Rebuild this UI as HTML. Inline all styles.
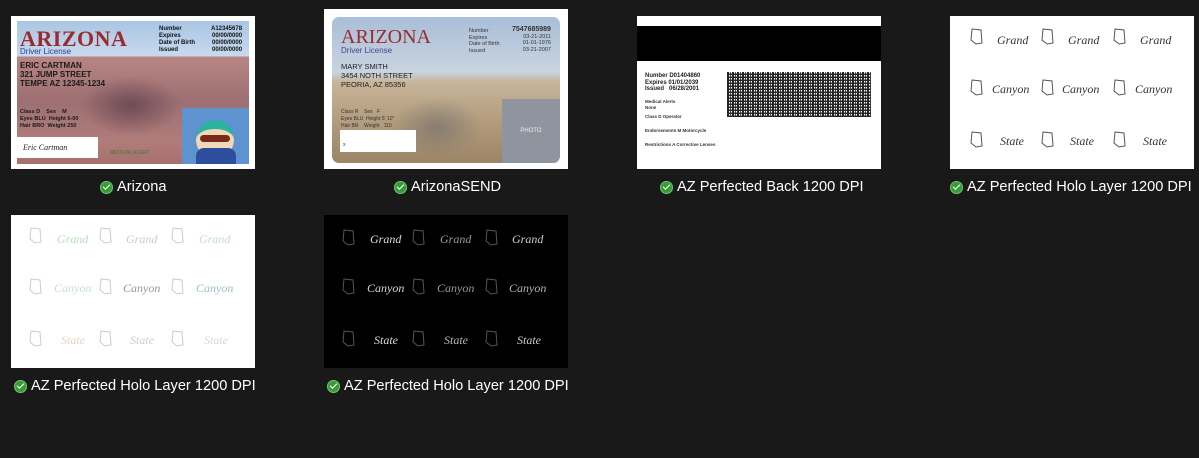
<!DOCTYPE html>
<html><head><meta charset="utf-8"><style>
body{margin:0;width:1199px;height:458px;background:#191919;position:relative;overflow:hidden;font-family:"Liberation Sans",sans-serif}
.t{position:absolute;overflow:hidden}
.lb{position:absolute;color:#fff;font-size:14.6px;white-space:nowrap;display:flex;align-items:center;gap:4px;height:18px}
.ck{width:13px;height:13px;border-radius:50%;background:#3a9a3a;box-shadow:0 0 0 1px #6dbf6d inset;position:relative;flex:none}
.ck:after{content:"";position:absolute;left:3px;top:3px;width:6px;height:3px;border-left:1.6px solid #fff;border-bottom:1.6px solid #fff;transform:rotate(-45deg)}
.a{position:absolute}
</style></head><body>

<!-- Thumb 1 -->
<div class="t" style="left:11px;top:16px;width:244px;height:153px;background:#fff">
 <div class="a" style="left:6px;top:5px;width:232px;height:143px;background:linear-gradient(180deg,#a9c6e3 0,#c7d9ee 35px,#b88583 36px,#9d6f72 80px,#b07c7a 120px,#a6706d 143px)"></div>
 <div class="a" style="left:70px;top:60px;width:100px;height:60px;background:radial-gradient(ellipse,#5a3c48,transparent 70%);opacity:.7"></div>
 <div class="a" style="left:9px;top:10px;font-family:'Liberation Serif',serif;font-weight:bold;font-size:22px;color:#9a2a2e;letter-spacing:.5px">ARIZONA</div>
 <div class="a" style="left:9px;top:31px;font-size:8px;color:#2c3d8a">Driver License</div>
 <div class="a" style="left:148px;top:10px;font-size:6px;font-weight:bold;line-height:7px;color:#111">Number<br>Expires<br>Date of Birth<br>Issued</div>
 <div class="a" style="left:200px;top:10px;font-size:6px;font-weight:bold;line-height:7px;color:#111;text-align:right">A12345678<br>00/00/0000<br>00/00/0000<br>00/00/0000</div>
 <div class="a" style="left:9px;top:45px;font-size:8px;font-weight:bold;line-height:9px;color:#1a1a1a">ERIC CARTMAN<br>321 JUMP STREET<br>TEMPE AZ 12345-1234</div>
 <div class="a" style="left:9px;top:93px;font-size:5.5px;font-weight:bold;line-height:7px;color:#1a1a1a">Class D &nbsp;&nbsp; Sex &nbsp;&nbsp; M<br>Eyes BLU &nbsp;Height 6-00<br>Hair BRO &nbsp;Weight 250</div>
 <div class="a" style="left:6px;top:121px;width:75px;height:21px;background:#fff;font-family:'Liberation Serif',serif;font-style:italic;font-size:8px;color:#222;line-height:21px;padding-left:6px">Eric Cartman</div>
 <div class="a" style="left:99px;top:134px;font-size:5px;color:#3a7a3a">MEDICAL ALERT</div>
 <div class="a" style="left:171px;top:92px;width:67px;height:56px;background:#5e93cf">
  <div class="a" style="left:14px;top:12px;width:38px;height:30px;border-radius:50%;background:#f2d8b8;border-top:9px solid #2bb3a0"></div>
  <div class="a" style="left:14px;top:40px;width:40px;height:16px;background:#2c4e9c;border-radius:8px 8px 0 0"></div>
  <div class="a" style="left:18px;top:27px;width:30px;height:7px;background:#7a2a1a;border-radius:4px"></div>
 </div>
</div>
<div class="lb" style="left:100px;top:178px"><span class="ck"></span>Arizona</div>

<!-- Thumb 2 -->
<div class="t" style="left:324px;top:9px;width:244px;height:160px;background:#fff">
 <div class="a" style="left:8px;top:8px;width:228px;height:146px;border-radius:7px;overflow:hidden;background:linear-gradient(180deg,#a9bed8 0,#c9d4e0 55px,#c8b49a 65px,#b59f80 100px,#9c8466 146px)">
  <div class="a" style="left:60px;top:80px;width:90px;height:60px;background:radial-gradient(ellipse,#6c6a6a,transparent 70%);opacity:.6"></div>
  <div class="a" style="left:170px;top:82px;width:58px;height:64px;background:#8f959f;color:#eee;font-size:6px;text-align:center;line-height:64px">PHOTO</div>
  <div class="a" style="left:8px;top:113px;width:76px;height:22px;background:#fff;font-size:5px;color:#333;padding:12px 0 0 3px;box-sizing:border-box">x</div>
 </div>
 <div class="a" style="left:17px;top:17px;font-family:'Liberation Serif',serif;font-size:20px;color:#9a2a2e">ARIZONA</div>
 <div class="a" style="left:17px;top:37px;font-size:8px;color:#3c4a8a">Driver License</div>
 <div class="a" style="left:145px;top:19px;font-size:5.5px;line-height:6.5px;color:#333">Number<br>Expires<br>Date of Birth<br>Issued</div>
 <div class="a" style="left:188px;top:18px;font-size:5.5px;line-height:6.5px;color:#333;text-align:right"><b style="font-size:7px">7547685989</b><br>03-21-2011<br>01-01-1976<br>03-21-2007</div>
 <div class="a" style="left:17px;top:53px;font-size:7.5px;line-height:9px;color:#222">MARY SMITH<br>3454 NOTH STREET<br>PEORIA, AZ 85356</div>
 <div class="a" style="left:17px;top:100px;font-size:5px;line-height:7px;color:#333">Class R &nbsp;&nbsp; Sex &nbsp; F<br>Eyes BLU &nbsp;Height 6' 10"<br>Hair BR &nbsp;&nbsp; Weight &nbsp; 110</div>
</div>
<div class="lb" style="left:394px;top:178px"><span class="ck"></span>ArizonaSEND</div>

<!-- Thumb 3 -->
<div class="t" style="left:637px;top:16px;width:244px;height:153px;background:#fff">
 <div class="a" style="left:0;top:10px;width:244px;height:35px;background:#000"></div>
 <div class="a" style="left:8px;top:57px;font-size:6px;font-weight:bold;line-height:6.5px;color:#222">Number D01404860<br>Expires 01/01/2039<br>Issued &nbsp; 06/28/2001</div>
 <div class="a" style="left:8px;top:83px;font-size:4.5px;font-weight:bold;line-height:6px;color:#333">Medical Alerts<br>None</div>
 <div class="a" style="left:8px;top:98px;font-size:4.5px;font-weight:bold;color:#333">Class D Operator</div>
 <div class="a" style="left:8px;top:112px;font-size:4.5px;font-weight:bold;color:#333">Endorsements M Motorcycle</div>
 <div class="a" style="left:8px;top:126px;font-size:4.5px;font-weight:bold;color:#333">Restrictions A Corrective Lenses</div>
 <div class="a" style="left:90px;top:56px;width:144px;height:45px;background:repeating-linear-gradient(90deg,#000 0 2px,#fff 2px 3px,#333 3px 4px,#fff 4px 5px),repeating-linear-gradient(0deg,#000 0 1px,#888 1px 2px,#fff 2px 3px);background-blend-mode:multiply;opacity:.85"></div>
</div>
<div class="lb" style="left:660px;top:178px"><span class="ck"></span>AZ Perfected Back 1200 DPI</div>

<!-- Holo 1 (white) -->
<svg class="t" style="left:950px;top:16px" width="244" height="153" viewBox="0 0 244 153">
 <rect width="244" height="153" fill="#fff"/>
 <defs><path id="az" d="M0 0 L9 1 L10 14 L4 15 L-1 11 Z" fill="none" stroke="#555" stroke-width="1"/></defs>
 <g font-family="Liberation Serif,serif" font-style="italic" font-size="12" fill="#333">
  <use href="#az" x="22" y="13"/><text x="47" y="28">Grand</text>
  <use href="#az" x="93" y="13"/><text x="118" y="28">Grand</text>
  <use href="#az" x="165" y="13"/><text x="190" y="28">Grand</text>
  <use href="#az" x="22" y="64"/><text x="42" y="77">Canyon</text>
  <use href="#az" x="93" y="64"/><text x="112" y="77">Canyon</text>
  <use href="#az" x="165" y="64"/><text x="185" y="77">Canyon</text>
  <use href="#az" x="22" y="116"/><text x="50" y="129">State</text>
  <use href="#az" x="93" y="116"/><text x="120" y="129">State</text>
  <use href="#az" x="165" y="116"/><text x="193" y="129">State</text>
 </g>
</svg>
<div class="lb" style="left:950px;top:178px"><span class="ck"></span>AZ Perfected Holo Layer 1200 DPI</div>

<!-- Holo 2 (faint) -->
<svg class="t" style="left:11px;top:215px" width="244" height="153" viewBox="0 0 244 153">
 <rect width="244" height="153" fill="#fff"/>
 <g font-family="Liberation Serif,serif" font-style="italic" font-size="12" opacity=".6">
  <use href="#az" x="20" y="13" opacity=".5"/><text x="46" y="28" fill="#8c8">Grand</text>
  <use href="#az" x="90" y="13" opacity=".5"/><text x="115" y="28" fill="#aaa">Grand</text>
  <use href="#az" x="162" y="13" opacity=".5"/><text x="188" y="28" fill="#9c9">Grand</text>
  <use href="#az" x="20" y="64" opacity=".5"/><text x="43" y="77" fill="#9cb">Canyon</text>
  <use href="#az" x="90" y="64" opacity=".5"/><text x="112" y="77" fill="#456">Canyon</text>
  <use href="#az" x="162" y="64" opacity=".5"/><text x="185" y="77" fill="#59a">Canyon</text>
  <use href="#az" x="20" y="116" opacity=".5"/><text x="50" y="129" fill="#cb9">State</text>
  <use href="#az" x="90" y="116" opacity=".5"/><text x="119" y="129" fill="#aaa">State</text>
  <use href="#az" x="162" y="116" opacity=".5"/><text x="193" y="129" fill="#bbb">State</text>
 </g>
</svg>
<div class="lb" style="left:14px;top:377px"><span class="ck"></span>AZ Perfected Holo Layer 1200 DPI</div>

<!-- Holo 3 (black) -->
<svg class="t" style="left:324px;top:215px" width="244" height="153" viewBox="0 0 244 153">
 <rect width="244" height="153" fill="#000"/>
 <g font-family="Liberation Serif,serif" font-style="italic" font-size="12" fill="#ccc">
  <use href="#az" x="20" y="15" style="stroke:#bbb"/><text x="46" y="28" fill="#ddd">Grand</text>
  <use href="#az" x="90" y="15"/><text x="116" y="28" fill="#999">Grand</text>
  <use href="#az" x="163" y="15"/><text x="188" y="28" fill="#ccc">Grand</text>
  <use href="#az" x="20" y="64"/><text x="43" y="77" fill="#cdc">Canyon</text>
  <use href="#az" x="90" y="64"/><text x="113" y="77" fill="#999">Canyon</text>
  <use href="#az" x="163" y="64"/><text x="185" y="77" fill="#aba">Canyon</text>
  <use href="#az" x="20" y="116"/><text x="50" y="129" fill="#ddd">State</text>
  <use href="#az" x="90" y="116"/><text x="120" y="129" fill="#bbb">State</text>
  <use href="#az" x="163" y="116"/><text x="193" y="129" fill="#ccc">State</text>
 </g>
</svg>
<div class="lb" style="left:327px;top:377px"><span class="ck"></span>AZ Perfected Holo Layer 1200 DPI</div>

</body></html>
